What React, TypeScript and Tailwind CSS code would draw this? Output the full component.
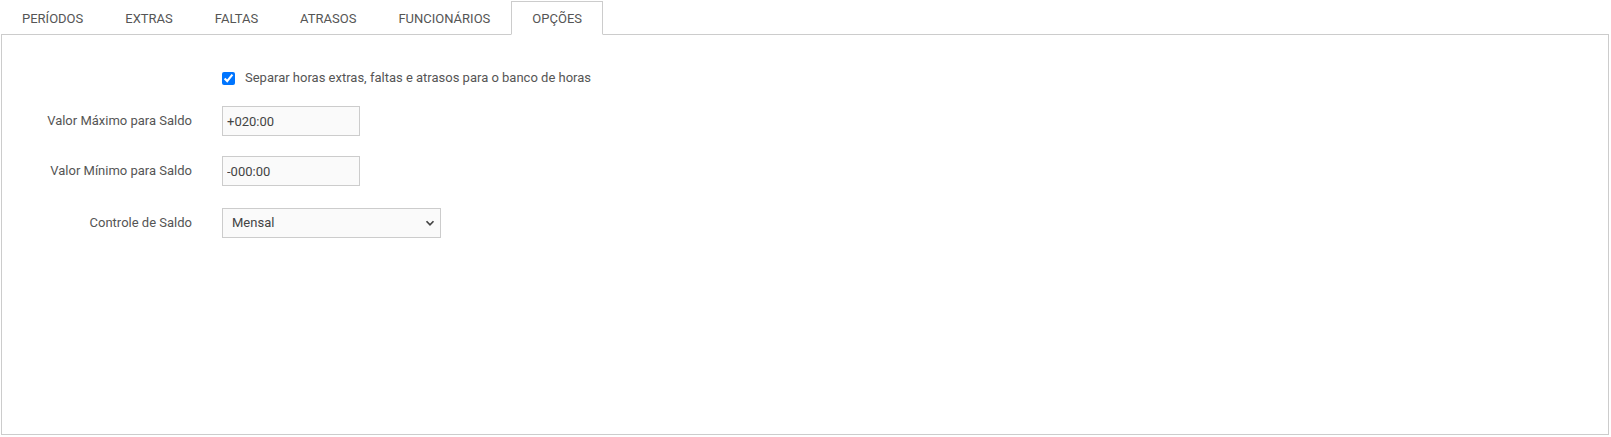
const tabs = ["PERÍODOS", "EXTRAS", "FALTAS", "ATRASOS", "FUNCIONÁRIOS", "OPÇÕES"];

export default function App() {
  const active = "OPÇÕES";
  return (
    <div className="min-h-screen bg-white pl-[1px] pr-[2px] pt-[1px] font-['Roboto',_'Liberation_Sans',_sans-serif] text-[13px] text-[#555]">
      {/* Tabs */}
      <div className="relative z-10 -mb-px flex h-[34px]">
        {tabs.map((t) => (
          <div
            key={t}
            className={
              t === active
                ? "flex h-[34px] items-center border border-[#ccc] border-b-white bg-white px-5 pt-px text-[#555]"
                : "flex h-[34px] items-center border border-transparent px-5 pt-px text-[#555]"
            }
          >
            {t}
          </div>
        ))}
      </div>

      {/* Panel */}
      <div className="h-[401px] border border-[#ccc] bg-white pt-[33px]">
        <div className="grid grid-cols-[190px_auto] items-center gap-x-[30px]">
          <div />
          <label className="flex h-5 items-center gap-[10px] text-[#555]">
            <input type="checkbox" defaultChecked className="m-0 h-[13px] w-[13px] accent-[#0075ff]" />
            Separar horas extras, faltas e atrasos para o banco de horas
          </label>

          <div className="mt-[18px] text-right">Valor Máximo para Saldo</div>
          <input
            defaultValue="+020:00"
            className="mt-[18px] h-[30px] w-[138px] border border-[#ccc] bg-[#fafafa] px-[4px] text-[#444] outline-none"
          />

          <div className="mt-5 text-right">Valor Mínimo para Saldo</div>
          <input
            defaultValue="-000:00"
            className="mt-5 h-[30px] w-[138px] border border-[#ccc] bg-[#fafafa] px-[4px] text-[#444] outline-none"
          />

          <div className="mt-[22px] text-right">Controle de Saldo</div>
          <div className="relative mt-[22px] h-[30px] w-[219px]">
            <select className="h-full w-full appearance-none border border-[#ccc] bg-[#fafafa] pl-[9px] pr-6 text-[#444] outline-none">
              <option>Mensal</option>
              <option>Semanal</option>
              <option>Anual</option>
            </select>
            <svg
              className="pointer-events-none absolute right-[4px] top-1/2 -translate-y-1/2"
              width="14"
              height="14"
              viewBox="0 0 16 16"
              fill="none"
              stroke="#444"
              strokeWidth="2"
            >
              <path d="M4 6l4 4 4-4" />
            </svg>
          </div>
        </div>
      </div>
    </div>
  );
}
